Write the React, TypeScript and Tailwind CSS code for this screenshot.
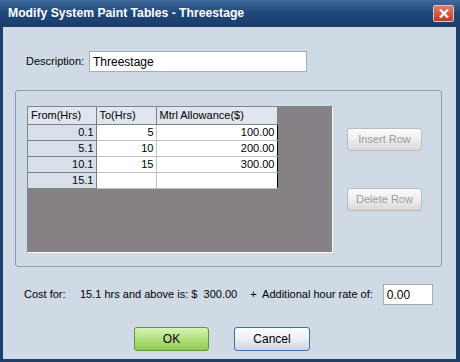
import React from "react";

const rows = [
  { from: "0.1", to: "5", amt: "100.00" },
  { from: "5.1", to: "10", amt: "200.00" },
  { from: "10.1", to: "15", amt: "300.00" },
  { from: "15.1", to: "", amt: "" },
];

const CloseIcon: React.FC = () => (
  <svg width="10" height="9" viewBox="0 0 10 9">
    <path d="M1 0.5 L9 8.5 M9 0.5 L1 8.5" stroke="white" strokeWidth="2.2" />
  </svg>
);

const App: React.FC = () => {
  return (
    <div
      className="w-[460px] h-[362px] flex flex-col bg-[#1c3f6e] text-[11px] text-black"
      style={{ fontFamily: '"Liberation Sans", Arial, sans-serif' }}
    >
      {/* title bar */}
      <div className="h-[27px] flex items-center justify-between pl-[8px] pr-[6px] bg-gradient-to-b from-[#40699c] via-[#1f477a] to-[#1a3c6a]">
        <p className="text-white font-bold text-[12.2px]">
          Modify System Paint Tables - Threestage
        </p>
        <div className="w-[21px] h-[17px] rounded-[2px] border border-[#e9c3bd] bg-gradient-to-b from-[#e07a66] to-[#c0392a] flex items-center justify-center">
          <CloseIcon />
        </div>
      </div>

      {/* client */}
      <div className="flex-1 ml-[3px] mr-[4px] mb-[3px] bg-[#cfdae5] flex flex-col">
        <div className="flex items-center mt-[24px] ml-[23px]">
          <p className="w-[63px]">Description:</p>
          <div className="w-[218px] h-[21px] bg-white border border-[#a5acb5] flex items-center pl-[3px] text-[12px]">
            Threestage
          </div>
        </div>

        {/* group box */}
        <div className="mt-[18px] ml-[12px] w-[427px] h-[177px] border border-[#8e9aa7] rounded-[3px] flex pt-[15px] pl-[11px]">
          <div className="w-[306px] h-[147px] bg-[#858184] border-l border-t border-[#7c8793] border-r border-b border-r-white border-b-white">
            <table className="border-collapse bg-white">
              <thead>
                <tr className="h-[17px]">
                  <th className="w-[68px] bg-[#dfe6ee] border border-[#808080] border-t-0 border-l-0 font-normal text-left pl-[3px]">
                    From(Hrs)
                  </th>
                  <th className="w-[60px] bg-[#dfe6ee] border border-[#808080] border-t-0 font-normal text-left pl-[3px]">
                    To(Hrs)
                  </th>
                  <th className="w-[121px] bg-[#dfe6ee] border border-[#808080] border-t-0 font-normal text-left pl-[3px]">
                    Mtrl Allowance($)
                  </th>
                </tr>
              </thead>
              <tbody>
                {rows.map((r) => (
                  <tr key={r.from} className="h-[16px]">
                    <td className="bg-[#d7e0ea] border border-[#808080] border-l-0 text-right pr-[2px] leading-[14px]">
                      {r.from}
                    </td>
                    <td className="border border-[#c0c0c0] text-right pr-[2px] leading-[14px]">
                      {r.to}
                    </td>
                    <td className="border border-[#c0c0c0] border-r-black text-right pr-[2px] leading-[14px]">
                      {r.amt}
                    </td>
                  </tr>
                ))}
              </tbody>
            </table>
          </div>

          <div className="flex flex-col ml-[14px] mt-[22px] gap-[37px]">
            <div className="w-[75px] h-[23px] rounded-[3px] border border-[#b8bcc2] bg-gradient-to-b from-[#fbfbfb] via-[#eeeeee] to-[#d9d9d9] flex items-center justify-center text-[#9a9a9a]">
              Insert Row
            </div>
            <div className="w-[75px] h-[23px] rounded-[3px] border border-[#b8bcc2] bg-gradient-to-b from-[#fbfbfb] via-[#eeeeee] to-[#d9d9d9] flex items-center justify-center text-[#9a9a9a]">
              Delete Row
            </div>
          </div>
        </div>

        {/* cost row */}
        <div className="flex items-center mt-[17px] ml-[21px]">
          <p className="w-[56px]">Cost for:</p>
          <p className="whitespace-pre">15.1 hrs and above is: $  300.00</p>
          <p className="ml-[13px] whitespace-pre">+  Additional hour rate of:</p>
          <div className="ml-[10px] w-[50px] h-[21px] bg-white border border-[#a5acb5] flex items-center pl-[3px] text-[12px]">
            0.00
          </div>
        </div>

        {/* buttons */}
        <div className="flex mt-[22px] ml-[131px] gap-[25px]">
          <div className="w-[75px] h-[24px] rounded-[3px] border border-[#5b9a2f] bg-gradient-to-b from-[#d9f2b6] via-[#b4e07e] to-[#8fca56] flex items-center justify-center text-[12px]">
            OK
          </div>
          <div className="w-[76px] h-[24px] rounded-[3px] border border-[#3c6fc4] bg-gradient-to-b from-[#ffffff] via-[#eceef2] to-[#cfd4dc] flex items-center justify-center text-[12px]">
            Cancel
          </div>
        </div>
      </div>
    </div>
  );
};

export default App;
